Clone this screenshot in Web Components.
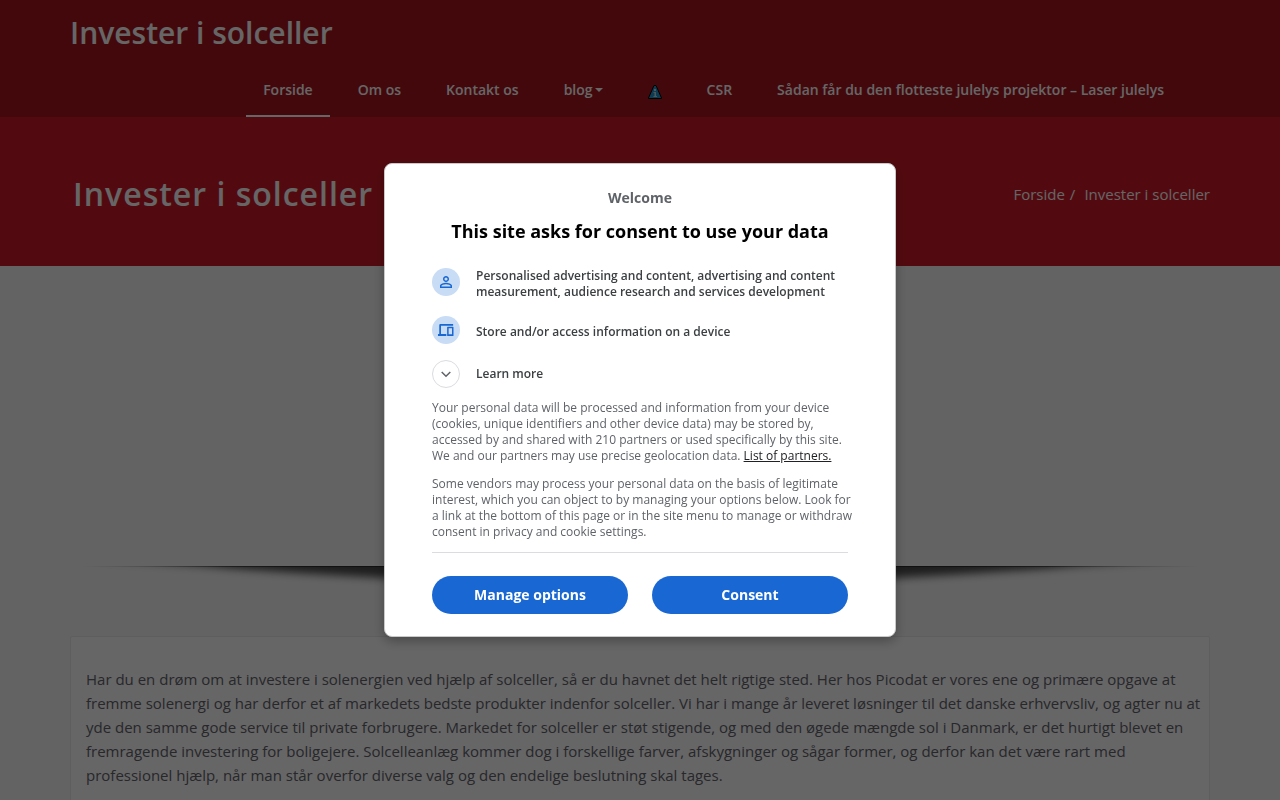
<!DOCTYPE html>
<html lang="da">
<head>
  <meta charset="UTF-8">
  <meta name="viewport" content="width=device-width, initial-scale=1.0">
  <title>Invester i solceller</title>
  <style>
    :root {
      --red: #ce1b28;
      --page-bg: #f8f8f8;
      --blue: #1967d2;
      --gutter: 15px;
    }

    /* no scrolling behind the consent dialog */
    html {
      overflow: hidden;
    }

    body {
      margin: 0;
      background-color: var(--page-bg);
      font-family: "Open Sans", "Noto Sans", sans-serif;
      color: #64646d;
    }
  </style>
</head>
<body>
  <site-header brand="Invester i solceller">
    <nav-item href="#forside" active>Forside</nav-item>
    <nav-item href="#om-os">Om os</nav-item>
    <nav-item href="#kontakt">Kontakt os</nav-item>
    <nav-item href="#blog" dropdown>blog</nav-item>
    <nav-item href="#info" label="Info"><info-icon></info-icon></nav-item>
    <nav-item href="#csr">CSR</nav-item>
    <nav-item href="#julelys">Sådan får du den flotteste julelys projektor – Laser julelys</nav-item>
  </site-header>

  <page-banner>
    Invester i solceller
    <a slot="parent" href="#forside">Forside</a>
    <span slot="current">Invester i solceller</span>
  </page-banner>

  <main>
    <slider-area></slider-area>
    <post-card>
      Har du en drøm om at investere i solenergien ved hjælp af solceller, så er du havnet det helt rigtige sted. Her hos Picodat er vores ene og primære opgave at<br>
      fremme solenergi og har derfor et af markedets bedste produkter indenfor solceller. Vi har i mange år leveret løsninger til det danske erhvervsliv, og agter nu at<br>
      yde den samme gode service til private forbrugere. Markedet for solceller er støt stigende, og med den øgede mængde sol i Danmark, er det hurtigt blevet en<br>
      fremragende investering for boligejere. Solcelleanlæg kommer dog i forskellige farver, afskygninger og sågar former, og derfor kan det være rart med<br>
      professionel hjælp, når man står overfor diverse valg og den endelige beslutning skal tages.
    </post-card>
  </main>

  <consent-dialog lang="en">
    <span slot="welcome">Welcome</span>
    <span slot="title">This site asks for consent to use your data</span>
    <consent-row slot="rows" icon="person">Personalised advertising and content, advertising and content measurement, audience research and services development</consent-row>
    <consent-row slot="rows" icon="devices">Store and/or access information on a device</consent-row>
    <consent-more slot="rows">Learn more</consent-more>
  </consent-dialog>

  <script>
    class SiteHeader extends HTMLElement {
      constructor() {
        super();
        const shadow = this.attachShadow({ mode: 'open' });

        shadow.innerHTML = `
          <style>
            :host {
              display: block;
              background-color: var(--red);
            }

            header {
              background-color: rgba(0, 0, 0, 0.18);
            }

            .container {
              max-width: 1140px;
              margin: 0 auto;
            }

            .brand {
              display: inline-block;
              padding: 13px 0;
              color: #fff;
              font-size: 30px;
              font-weight: 600;
              line-height: 40px;
              text-decoration: none;
            }

            nav {
              display: flex;
              justify-content: flex-end;
              padding: 0 23px 0 var(--gutter);
            }
          </style>
          <header>
            <div class="container">
              <a class="brand" href="#forside"></a>
              <nav><slot></slot></nav>
            </div>
          </header>
        `;
        shadow.querySelector('.brand').textContent = this.getAttribute('brand');
      }
    }

    class NavItem extends HTMLElement {
      constructor() {
        super();
        const shadow = this.attachShadow({ mode: 'open' });

        shadow.innerHTML = `
          <style>
            :host {
              display: block;
              margin: 0 6px 0 5px;
            }

            a {
              display: flex;
              align-items: center;
              gap: 2px;
              height: 20px;
              padding: 14px 17px 15px;
              border-bottom: 2px solid transparent;
              color: #fff;
              font-size: 14px;
              font-weight: 600;
              line-height: 20px;
              text-decoration: none;
              white-space: nowrap;
            }

            :host([active]) a {
              border-bottom-color: #fff;
            }

            .caret {
              border-top: 4px solid #fff;
              border-left: 4px solid transparent;
              border-right: 4px solid transparent;
            }
          </style>
          <a><span><slot></slot></span><span class="caret"></span></a>
        `;
        const link = shadow.querySelector('a');
        link.href = this.getAttribute('href');
        if (this.hasAttribute('label')) {
          link.setAttribute('aria-label', this.getAttribute('label'));
        }
        if (!this.hasAttribute('dropdown')) {
          shadow.querySelector('.caret').remove();
        }
      }
    }

    class InfoIcon extends HTMLElement {
      constructor() {
        super();
        const shadow = this.attachShadow({ mode: 'open' });

        shadow.innerHTML = `
          <style>
            :host {
              display: block;
              padding-top: 3px;
            }

            svg {
              display: block;
              width: 14px;
              height: 14px;
            }
          </style>
          <svg viewBox="0 0 14 14" aria-hidden="true">
            <path d="M6 .5h2L13.5 13v.5H.5V13z" fill="#2296cc" stroke="#000"/>
            <path d="M6 4h2v2H6zM5.500 7H8v4h1v1H5.500v-1H6.500V8h-1z" fill="#b9d9e6"/>
          </svg>
        `;
      }
    }

    class PageBanner extends HTMLElement {
      constructor() {
        super();
        const shadow = this.attachShadow({ mode: 'open' });

        shadow.innerHTML = `
          <style>
            :host {
              display: block;
              background-color: var(--red);
              color: #fff;
            }

            .container {
              display: flex;
              align-items: center;
              justify-content: space-between;
              max-width: 1140px;
              margin: 0 auto;
              padding: 54px 0 50px;
            }

            h1 {
              margin: 0;
              padding-left: 3px;
              font-size: 32px;
              font-weight: 600;
              line-height: 45px;
              letter-spacing: 1px;
            }

            nav {
              display: flex;
              gap: 5px;
              font-size: 15px;
              font-weight: 500;
              line-height: 24px;
            }

            .current {
              padding-left: 4px;
            }

            ::slotted(a) {
              color: inherit;
              text-decoration: none;
            }
          </style>
          <div class="container">
            <h1><slot></slot></h1>
            <nav aria-label="Breadcrumb">
              <slot name="parent"></slot>
              <span>/</span>
              <span class="current"><slot name="current"></slot></span>
            </nav>
          </div>
        `;
      }
    }

    class SliderArea extends HTMLElement {
      constructor() {
        super();
        const shadow = this.attachShadow({ mode: 'open' });

        shadow.innerHTML = `
          <style>
            :host {
              display: block;
            }

            .slides {
              height: 300px;
            }

            svg {
              display: block;
              width: 100%;
              max-width: 1140px;
              height: 40px;
              margin: 0 auto;
            }
          </style>
          <div class="slides"></div>
          <svg viewBox="0 0 1140 40" preserveAspectRatio="none" aria-hidden="true">
            <defs>
              <linearGradient id="fade">
                <stop offset="0.01" stop-color="#000" stop-opacity="0"/>
                <stop offset="0.06" stop-color="#000" stop-opacity="0.22"/>
                <stop offset="0.14" stop-color="#000" stop-opacity="0.7"/>
                <stop offset="0.86" stop-color="#000" stop-opacity="0.7"/>
                <stop offset="0.94" stop-color="#000" stop-opacity="0.22"/>
                <stop offset="0.99" stop-color="#000" stop-opacity="0"/>
              </linearGradient>
              <filter id="soft" x="-5%" y="-50%" width="110%" height="200%">
                <feGaussianBlur stdDeviation="8 4"/>
              </filter>
            </defs>
            <path d="M0 0h1140v1H0z" fill="url(#fade)" opacity="0.6"/>
            <path d="M0-34H1140V-6L1010 0Q800 16 570 22Q340 16 130 0L0-6z" fill="url(#fade)" filter="url(#soft)"/>
          </svg>
        `;
      }
    }

    class PostCard extends HTMLElement {
      constructor() {
        super();
        const shadow = this.attachShadow({ mode: 'open' });

        shadow.innerHTML = `
          <style>
            :host {
              display: block;
              max-width: 1140px;
              margin: 30px auto;
            }

            article {
              padding: 30px 0 30px var(--gutter);
              border: 1px solid #ebebeb;
              border-radius: 2px;
              background-color: #fff;
            }

            p {
              margin: 0;
              font-size: 15px;
              line-height: 24px;
            }
          </style>
          <article><p><slot></slot></p></article>
        `;
      }
    }

    const rowIcons = {
      person: 'M12 5.9a2.1 2.1 0 1 1 0 4.2 2.1 2.1 0 0 1 0-4.2m0 9c2.97 0 6.1 1.46 6.1 2.1v1.1H5.9V17c0-.64 3.13-2.1 6.1-2.1M12 4C9.79 4 8 5.79 8 8s1.79 4 4 4 4-1.79 4-4-1.79-4-4-4zm0 9c-2.67 0-8 1.34-8 4v3h16v-3c0-2.66-5.33-4-8-4z',
      devices: 'M4.500 4H21.500V6.200H5.300V17.200H12.500V20H1.300V17.200H3V5.500Q3 4 4.500 4zM14.300 7.500H21.200Q22 7.500 22 8.300V19.200Q22 20 21.200 20H14.300Q13.500 20 13.500 19.200V8.300Q13.500 7.500 14.300 7.500zM15.500 9.800V17.700H20V9.800z'
    };

    class ConsentRow extends HTMLElement {
      constructor() {
        super();
        const shadow = this.attachShadow({ mode: 'open' });

        shadow.innerHTML = `
          <style>
            :host {
              display: flex;
              gap: 16px;
              color: #3c4043;
              font-size: 12px;
              font-weight: 600;
              line-height: 16px;
            }

            .icon {
              display: flex;
              flex: none;
              align-items: center;
              justify-content: center;
              width: 28px;
              height: 28px;
              border-radius: 50%;
              background-color: #c8dcf5;
            }

            svg {
              width: 18px;
              height: 18px;
              fill: var(--blue);
              fill-rule: evenodd;
            }

            .text {
              display: flex;
              align-items: flex-end;
              align-self: center;
              min-height: 20px;
            }
          </style>
          <span class="icon"><svg viewBox="0 0 24 24" aria-hidden="true"><path/></svg></span>
          <span class="text"><span><slot></slot></span></span>
        `;
        shadow.querySelector('path').setAttribute('d', rowIcons[this.getAttribute('icon')]);
      }
    }

    class ConsentMore extends HTMLElement {
      constructor() {
        super();
        const shadow = this.attachShadow({ mode: 'open' });

        shadow.innerHTML = `
          <style>
            :host {
              display: block;
            }

            button {
              display: flex;
              align-items: center;
              gap: 16px;
              padding: 0;
              border: 0;
              background: none;
              color: #3c4043;
              font: inherit;
              font-size: 12px;
              font-weight: 600;
              line-height: 16px;
              cursor: pointer;
            }

            .icon {
              display: flex;
              box-sizing: border-box;
              align-items: center;
              justify-content: center;
              width: 28px;
              height: 28px;
              border: 1px solid #dadce0;
              border-radius: 50%;
            }

            svg {
              width: 18px;
              height: 18px;
              fill: none;
              stroke: #5f6368;
              stroke-width: 1.5;
            }
          </style>
          <button type="button" aria-expanded="false">
            <span class="icon"><svg viewBox="0 0 18 18" aria-hidden="true"><path d="M4.700 7 9 11.300 13.300 7"/></svg></span>
            <slot></slot>
          </button>
        `;
      }
    }

    class ConsentDialog extends HTMLElement {
      constructor() {
        super();
        const shadow = this.attachShadow({ mode: 'open' });

        shadow.innerHTML = `
          <style>
            :host {
              display: flex;
              position: fixed;
              inset: 0;
              z-index: 100;
              align-items: center;
              justify-content: center;
              background-color: rgba(0, 0, 0, 0.6);
            }

            .dialog {
              box-sizing: border-box;
              width: 40%;
              min-width: 320px;
              padding: 24px 47px 22px;
              border: 1px solid #c9c9c9;
              border-radius: 8px;
              background-color: #fff;
              box-shadow: 0 4px 12px rgba(0, 0, 0, 0.3);
              color: #5f6368;
            }

            .welcome {
              margin: 0 0 11px;
              font-size: 14px;
              font-weight: 700;
              line-height: 20px;
              text-align: center;
            }

            h2 {
              margin: 0 0 25px;
              color: #000;
              font-size: 18px;
              font-weight: 700;
              line-height: 24px;
              text-align: center;
            }

            .rows {
              display: flex;
              flex-direction: column;
              gap: 16px;
              margin-bottom: 12px;
            }

            .info {
              margin: 0 -4px 12px 0;
              font-size: 12px;
              line-height: 16px;
            }

            .info a {
              color: #202124;
            }

            .buttons {
              display: grid;
              grid-template-columns: 1fr 1fr;
              gap: 24px;
              padding-top: 23px;
              border-top: 1px solid #dadce0;
            }

            button {
              height: 38px;
              padding: 0 16px 2px;
              border: 0;
              border-radius: 19px;
              background-color: var(--blue);
              color: #fff;
              font: inherit;
              font-size: 14px;
              font-weight: 700;
              cursor: pointer;
            }
          </style>
          <div class="dialog" role="dialog" aria-modal="true" aria-labelledby="title">
            <p class="welcome"><slot name="welcome"></slot></p>
            <h2 id="title"><slot name="title"></slot></h2>
            <div class="rows"><slot name="rows"></slot></div>
            <p class="info">Your personal data will be processed and information from your device (cookies, unique identifiers and other device data) may be stored by, accessed by and shared with 210 partners or used specifically by this site. We and our partners may use precise geolocation data. <a href="#partners">List of partners.</a></p>
            <p class="info">Some vendors may process your personal data on the basis of legitimate interest, which you can object to by managing your options below. Look for a link at the bottom of this page or in the site menu to manage or withdraw consent in privacy and cookie settings.</p>
            <div class="buttons">
              <button type="button">Manage options</button>
              <button type="button">Consent</button>
            </div>
          </div>
        `;
      }
    }

    customElements.define('site-header', SiteHeader);
    customElements.define('nav-item', NavItem);
    customElements.define('info-icon', InfoIcon);
    customElements.define('page-banner', PageBanner);
    customElements.define('slider-area', SliderArea);
    customElements.define('post-card', PostCard);
    customElements.define('consent-row', ConsentRow);
    customElements.define('consent-more', ConsentMore);
    customElements.define('consent-dialog', ConsentDialog);
  </script>
</body>
</html>
